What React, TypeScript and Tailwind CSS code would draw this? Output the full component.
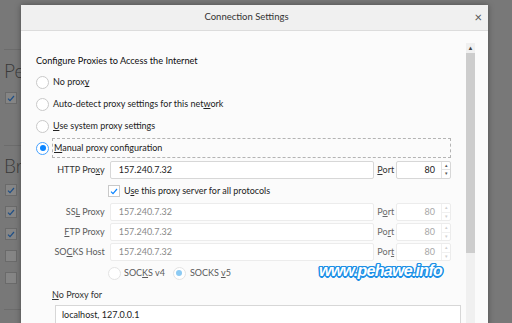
import React from 'react';

const UI = "font-['Segoe_UI','Lato',sans-serif]";

function Radio({ checked, disabled }: { checked?: boolean; disabled?: boolean }) {
  const ring = checked && !disabled ? 'border-[#45a1ff]' : disabled ? 'border-[#e3e3e3]' : 'border-[#c9c9c9]';
  return (
    <span className={`flex h-[13px] w-[13px] shrink-0 items-center justify-center rounded-full border bg-white ${ring}`}>
      {checked && <span className={`h-[6px] w-[6px] rounded-full ${disabled ? 'bg-[#8ccaf3]' : 'bg-[#0a84ff]'}`} />}
    </span>
  );
}

function Check() {
  return (
    <span className="flex h-[12px] w-[12px] shrink-0 items-center justify-center border border-[#c9c9c9] bg-white">
      <svg width="8" height="7" viewBox="0 0 8 7">
        <path d="M1 3.6 L3 5.6 L7 1" fill="none" stroke="#0a84ff" strokeWidth="1.2" />
      </svg>
    </span>
  );
}

function PortBox({ disabled }: { disabled?: boolean }) {
  return (
    <div className={`flex h-[18px] w-[55px] rounded-[2px] border bg-white ${disabled ? 'border-[#ececec]' : 'border-[#d7d7d7]'}`}>
      <span className={`flex flex-1 items-center justify-end pr-[6px] ${disabled ? 'text-[#a8a8a8]' : 'text-[#222]'}`}>80</span>
      <div className="flex w-[9px] flex-col">
        <span className={`flex flex-1 items-center justify-center border-b border-l text-[5px] leading-none ${disabled ? 'border-[#f0f0f0] text-[#d0d0d0]' : 'border-[#e3e3e3] text-[#555]'}`}>▴</span>
        <span className={`flex flex-1 items-center justify-center border-l text-[5px] leading-none ${disabled ? 'border-[#f0f0f0] text-[#d0d0d0]' : 'border-[#e3e3e3] text-[#555]'}`}>▾</span>
      </div>
    </div>
  );
}

function ProxyRow({ label, port, disabled, h }: { label: React.ReactNode; port: React.ReactNode; disabled?: boolean; h: string }) {
  return (
    <div className={`flex items-center ${h}`}>
      <span className={`w-[70px] pr-[1px] text-right ${disabled ? 'text-[#5a5a5a]' : 'text-[#333]'}`}>{label}</span>
      <div className={`ml-[4px] flex h-[18px] w-[266px] items-center rounded-[2px] border bg-white pl-[8px] ${disabled ? 'border-[#ececec] text-[#8a8a8a]' : 'border-[#d7d7d7] text-[#222]'}`}>
        157.240.7.32
      </div>
      <span className={`ml-[3px] w-[19px] ${disabled ? 'text-[#6a6a6a]' : 'text-[#333]'}`}>{port}</span>
      <PortBox disabled={disabled} />
    </div>
  );
}

function BgBox({ checked }: { checked?: boolean }) {
  return (
    <span className="flex h-[12px] w-[12px] items-center justify-center border border-[#6a6a6a] bg-[#858585]">
      {checked && (
        <svg width="8" height="7" viewBox="0 0 8 7">
          <path d="M1 3.6 L3 5.6 L7 1" fill="none" stroke="#1d4e86" strokeWidth="1.2" />
        </svg>
      )}
    </span>
  );
}

export default function App() {
  return (
    <div className={`relative h-[323px] w-[512px] overflow-hidden bg-[#787878] ${UI}`}>
      {/* preferences page behind the dim overlay, cut off by the dialog */}
      <div className="flex w-[21px] flex-col overflow-hidden whitespace-nowrap pl-[4px] text-[#3a3a3a]">
        <div className="mt-[49px] h-px w-[60px] bg-[#6c6c6c]" />
        <div className="mt-[9px] h-[24px] text-[19px] font-light leading-[24px]">Per</div>
        <div className="mt-[9px] pl-[1px]"><BgBox checked /></div>
        <div className="mt-[41px] h-px w-[60px] bg-[#6c6c6c]" />
        <div className="mt-[8px] h-[24px] text-[19px] font-light leading-[24px]">Bro</div>
        <div className="mt-[6px] flex flex-col gap-[10px] pl-[1px]">
          <BgBox checked />
          <BgBox checked />
          <BgBox checked />
          <BgBox />
          <BgBox />
        </div>
        <div className="mt-[25px] h-px w-[60px] bg-[#6c6c6c]" />
      </div>

      {/* Connection Settings dialog */}
      <div className="absolute left-[21px] top-[5px] flex h-[340px] w-[467px] flex-col bg-[#fbfbfb] shadow-[0_0_6px_rgba(0,0,0,0.35)]">
        <div className="relative flex h-[26px] shrink-0 items-center justify-center border-b border-[#dcdcdc] bg-[#f0f0f0] pr-[16px] text-[9.5px] text-[#333]">
          Connection Settings
          <span className="absolute right-[6px] top-[5px] text-[13px] leading-[14px] text-[#555]">×</span>
        </div>

        <div className="flex flex-1">
          <div className="flex w-[430px] flex-col pl-[15px] pt-[20px] text-[9px] text-[#222]">
            <div className="flex h-[20px] items-center text-[9.2px] text-[#0c0c0d]">Configure Proxies to Access the Internet</div>

            <div className="flex h-[22px] items-center gap-[4px]">
              <Radio />
              <span>No prox<u>y</u></span>
            </div>
            <div className="flex h-[22px] items-center gap-[4px]">
              <Radio />
              <span>Auto-detect proxy settings for this net<u>w</u>ork</span>
            </div>
            <div className="flex h-[22px] items-center gap-[4px]">
              <Radio />
              <span><u>U</u>se system proxy settings</span>
            </div>
            <div className="flex h-[22px] items-center gap-[3px]">
              <Radio checked />
              <span className="flex h-[20px] w-[403px] items-center border border-dashed border-[#b4b4b4] pl-[1px]">
                <span><u>M</u>anual proxy configuration</span>
              </span>
            </div>

            <ProxyRow h="h-[21px]" label={<>HTTP Pro<u>x</u>y</>} port={<><u>P</u>ort</>} />

            <div className="flex h-[22px] items-center gap-[4px] pl-[72px]">
              <Check />
              <span>U<u>s</u>e this proxy server for all protocols</span>
            </div>

            <ProxyRow h="h-[20px]" disabled label={<>SS<u>L</u> Proxy</>} port={<>P<u>o</u>rt</>} />
            <ProxyRow h="h-[20px]" disabled label={<><u>F</u>TP Proxy</>} port={<>Po<u>r</u>t</>} />
            <ProxyRow h="h-[20px]" disabled label={<>SO<u>C</u>KS Host</>} port={<>Por<u>t</u></>} />

            <div className="flex h-[22px] items-center pl-[72px] text-[#5a5a5a]">
              <Radio disabled />
              <span className="ml-[3px]">SOC<u>K</u>S v4</span>
              <span className="ml-[8px]"><Radio checked disabled /></span>
              <span className="ml-[4px]">SOCKS <u>v</u>5</span>
            </div>

            <div className="flex h-[21px] items-center pl-[16px] text-[#333]">
              <span><u>N</u>o Proxy for</span>
            </div>
            <div className="ml-[19px] h-[40px] w-[406px] border border-[#d7d7d7] bg-white px-[6px] pt-[2px] text-[#222]">
              localhost, 127.0.0.1
            </div>
          </div>

          {/* scrollbar */}
          <div className="ml-[15px] mt-[12px] flex w-[9px] flex-col bg-[#f0f0f0]">
            <div className="flex h-[10px] items-center justify-center text-[6px] leading-none text-[#444]">▲</div>
            <div className="h-[200px] bg-[#cdcdcd]" />
          </div>
        </div>
      </div>

      {/* watermark */}
      <div className="absolute left-[319px] top-[259px] font-['Liberation_Sans',sans-serif] text-[16px] font-bold italic tracking-[-0.7px] text-white [text-shadow:-1.5px_0_#1b8fe6,1.5px_0_#1b8fe6,0_-1.5px_#1b8fe6,0_1.5px_#1b8fe6,-1px_-1px_#1b8fe6,1px_1px_#1b8fe6,-1px_1px_#1b8fe6,1px_-1px_#1b8fe6]">
        www.pehawe.info
      </div>
    </div>
  );
}
